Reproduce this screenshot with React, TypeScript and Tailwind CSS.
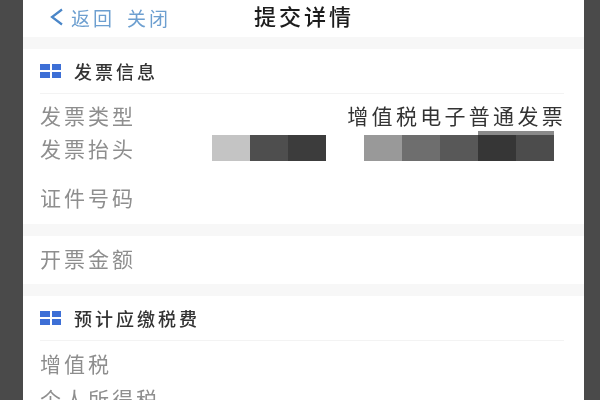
const fontFamily = "font-['Noto_Sans_CJK_SC','Liberation_Sans',sans-serif]";

function GridIcon() {
  return (
    <div className="grid grid-cols-2 gap-x-[2px] gap-y-[2px] w-[21px] h-[14px] shrink-0">
      <div className="bg-[#3d6fd6]" />
      <div className="bg-[#3d6fd6]" />
      <div className="bg-[#3d6fd6]" />
      <div className="bg-[#3d6fd6]" />
    </div>
  );
}

function Band() {
  return <div className="h-3 bg-[#f7f7f7]" />;
}

function SectionHeader({ title }: { title: string }) {
  return (
    <div className="h-[45px] mr-[20px] flex items-center gap-[13px] border-b border-[#f3f3f3]">
      <GridIcon />
      <span className="text-[18px] tracking-[3px] leading-none font-medium text-[#333333]">{title}</span>
    </div>
  );
}

function Label({ text }: { text: string }) {
  return <span className="text-[21px] tracking-[3px] leading-none text-[#8e8e8e]">{text}</span>;
}

function Mask({ color, tall }: { color: string; tall?: boolean }) {
  return tall ? (
    <div className={`w-[38px] h-[30px] border-t-4 border-[#8a8a8a] ${color}`} />
  ) : (
    <div className={`w-[38px] h-[26px] ${color}`} />
  );
}

export default function App() {
  return (
    <div className={`w-[600px] h-[400px] overflow-hidden flex bg-[#4a4a4a] ${fontFamily}`}>
      <div className="w-[561px] ml-[23px] h-[400px] bg-white overflow-hidden blur-[0.7px]">
        {/* nav */}
        <div className="h-[37px] pb-[3px] flex items-center relative">
          <svg width="16" height="18" viewBox="0 0 16 18" className="ml-[26px] mr-[6px]" fill="none">
            <path d="M13 1.5 L3 9 L13 16.5" stroke="#4a86c8" strokeWidth="2.2" />
          </svg>
          <span className="text-[19px] tracking-[3px] leading-none text-[#6d9fd0]">返回</span>
          <span className="ml-[12px] text-[19px] tracking-[3px] leading-none text-[#6d9fd0]">关闭</span>
          <span className="absolute left-[231px] top-[4px] text-[22px] tracking-[3px] leading-none font-medium text-[#1c1c1c]">
            提交详情
          </span>
        </div>
        <Band />

        <div className="pl-[17px]">
          <SectionHeader title="发票信息" />
          <div className="h-[39px] flex items-end justify-between pb-[7px] pr-[18px]">
            <Label text="发票类型" />
            <span className="text-[21px] tracking-[3.3px] leading-none text-[#333333]">增值税电子普通发票</span>
          </div>
          <div className="h-[34px] pb-[4px] flex items-center relative">
            <Label text="发票抬头" />
            {/* masked values */}
            <div className="absolute left-[172px] bottom-[6px] flex items-end">
              <Mask color="bg-[#c4c4c4]" />
              <Mask color="bg-[#4e4e4e]" />
              <Mask color="bg-[#3c3c3c]" />
              <div className="w-[38px]" />
              <Mask color="bg-[#999999]" />
              <Mask color="bg-[#6e6e6e]" />
              <Mask color="bg-[#585858]" />
              <Mask color="bg-[#363636]" tall />
              <Mask color="bg-[#4c4c4c]" tall />
            </div>
          </div>
          <div className="h-[57px] pt-[3px] flex items-center">
            <Label text="证件号码" />
          </div>
        </div>
        <Band />
        <div className="h-[48px] pb-[4px] pl-[17px] flex items-center">
          <Label text="开票金额" />
        </div>
        <Band />

        <div className="pl-[17px]">
          <SectionHeader title="预计应缴税费" />
          <div className="h-[48px] pb-[4px] flex items-center">
            <Label text="增值税" />
          </div>
          <div className="mt-[-1px]">
            <Label text="个人所得税" />
          </div>
        </div>
      </div>
    </div>
  );
}
